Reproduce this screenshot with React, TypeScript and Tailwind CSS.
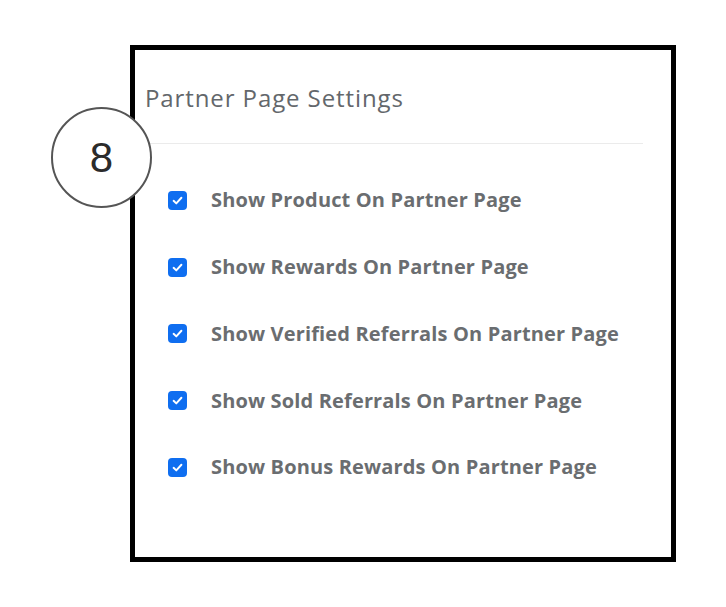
const options = [
  "Show Product On Partner Page",
  "Show Rewards On Partner Page",
  "Show Verified Referrals On Partner Page",
  "Show Sold Referrals On Partner Page",
  "Show Bonus Rewards On Partner Page",
];

function Check() {
  return (
    <span className="flex h-[19px] w-[19px] shrink-0 items-center justify-center rounded-[4px] bg-[#0f6ef0]">
      <svg viewBox="0 0 16 16" className="h-[13px] w-[13px]" fill="none">
        <path d="M3.2 8.4 L6.5 11.5 L12.8 4.6" stroke="white" strokeWidth="2.4" strokeLinecap="round" strokeLinejoin="round" />
      </svg>
    </span>
  );
}

export default function App() {
  return (
    <div className="relative h-[607px] w-[726px] bg-white" style={{ fontFamily: '"Open Sans", "Liberation Sans", sans-serif' }}>
      <div className="ml-[130px] pt-[45px]">
        <div className="h-[517px] w-[546px] border-[5px] border-black bg-white">
          <h1 className="pl-[10px] pt-[33px] text-[24px] leading-[30px] font-normal tracking-[0.9px] text-[#63676b]">
            Partner Page Settings
          </h1>
          <div className="mr-[28px] mt-[30px] border-t border-[#ebebeb]" />
          <ul className="pl-[33px] pt-[23px]">
            {options.map((label) => (
              <li key={label} className="flex h-[66.75px] items-center gap-[24px]">
                <Check />
                <span className="text-[20px] font-bold tracking-[0.15px] text-[#6a6d70]">{label}</span>
              </li>
            ))}
          </ul>
        </div>
      </div>

      <div className="absolute left-[51px] top-[107px] flex h-[101px] w-[101px] items-center justify-center rounded-full border-2 border-[#555555] bg-white">
        <span className="text-[42px] leading-none text-[#2b2b2b]" style={{ fontFamily: '"Liberation Sans", Arial, sans-serif' }}>
          8
        </span>
      </div>
    </div>
  );
}
